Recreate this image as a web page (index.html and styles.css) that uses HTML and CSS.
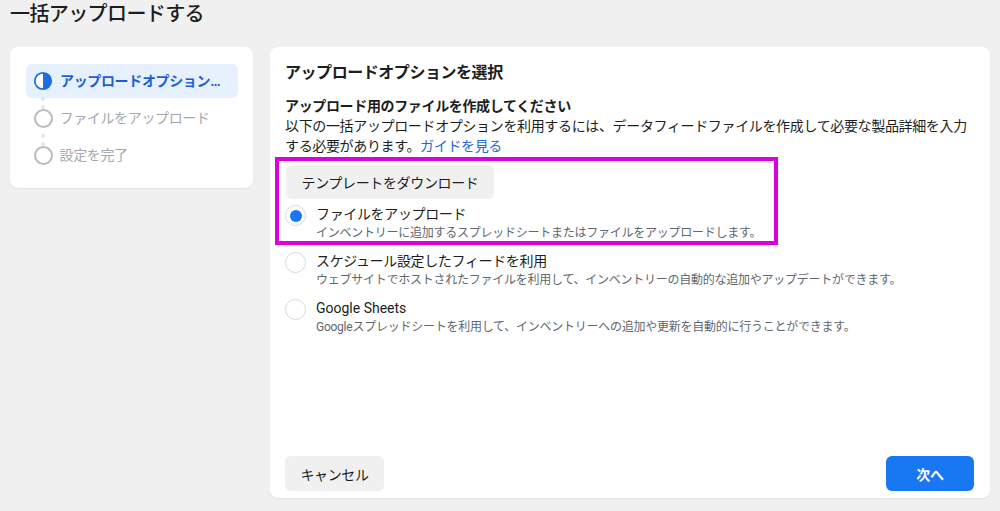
FILE: index.html
```html
<!DOCTYPE html>
<html lang="ja">
<head>
<meta charset="utf-8">
<title>一括アップロードする</title>
<link rel="stylesheet" href="styles.css">
</head>
<body>
<div class="page">
  <h1 class="title">一括アップロードする</h1>
  <div class="layout">
    <aside class="steps-card">
      <div class="step active">
        <svg class="step-icon" viewBox="0 0 20 20" width="20" height="20">
          <circle cx="10" cy="10" r="8.2" fill="#fff" stroke="#1b6fe0" stroke-width="1.8"/>
          <path d="M10 1.8 A8.2 8.2 0 0 1 10 18.2 Z" fill="#1b6fe0"/>
        </svg>
        <span class="step-text">アップロードオプションを選択</span>
      </div>
      <div class="step">
        <span class="step-circle"></span>
        <span class="step-text">ファイルをアップロード</span>
      </div>
      <div class="step last">
        <span class="step-circle"></span>
        <span class="step-text">設定を完了</span>
      </div>
    </aside>

    <main class="main-card">
      <h2 class="heading">アップロードオプションを選択</h2>
      <h3 class="subheading">アップロード用のファイルを作成してください</h3>
      <p class="intro">以下の一括アップロードオプションを利用するには、データフィードファイルを作成して必要な製品詳細を入力する必要があります。<a class="link" href="#">ガイドを見る</a></p>

      <button class="btn btn-gray template-btn">テンプレートをダウンロード</button>

      <div class="options">
        <label class="option">
          <span class="radio checked"></span>
          <span class="option-body">
            <span class="option-title">ファイルをアップロード</span>
            <span class="option-desc">インベントリーに追加するスプレッドシートまたはファイルをアップロードします。</span>
          </span>
        </label>
        <label class="option">
          <span class="radio"></span>
          <span class="option-body">
            <span class="option-title">スケジュール設定したフィードを利用</span>
            <span class="option-desc">ウェブサイトでホストされたファイルを利用して、インベントリーの自動的な追加やアップデートができます。</span>
          </span>
        </label>
        <label class="option">
          <span class="radio"></span>
          <span class="option-body">
            <span class="option-title latin">Google Sheets</span>
            <span class="option-desc">Googleスプレッドシートを利用して、インベントリーへの追加や更新を自動的に行うことができます。</span>
          </span>
        </label>
      </div>

      <div class="footer">
        <button class="btn btn-gray cancel-btn">キャンセル</button>
        <button class="btn btn-blue next-btn">次へ</button>
      </div>

      <div class="highlight-box"></div>
    </main>
  </div>
</div>
</body>
</html>
```

FILE: styles.css
```css
* { box-sizing: border-box; }

html, body {
  margin: 0;
  padding: 0;
  background: #f0f0f0;
  font-family: Roboto, "Noto Sans CJK JP", sans-serif;
  color: #1c1e21;
}

.page {
  padding: 0 10px;
  height: 511px;
  overflow: hidden;
}

.title {
  margin: 0;
  padding-top: 1px;
  height: 47px;
  font-size: 20px;
  line-height: 26px;
  font-weight: 500;
  letter-spacing: -0.6px;
  color: #1c1e21;
}

.layout {
  display: flex;
  gap: 17px;
  align-items: flex-start;
}

/* Left steps card */
.steps-card {
  width: 243px;
  flex: none;
  background: #fff;
  border-radius: 8px;
  padding: 17px 15px 16px 16px;
  box-shadow: 0 1px 2px rgba(0,0,0,0.06);
  display: flex;
  flex-direction: column;
  gap: 3px;
}

.step {
  position: relative;
  display: flex;
  align-items: center;
  height: 34px;
  padding: 0 16px 0 7px;
  border-radius: 6px;
  gap: 7px;
}

.step::before,
.step::after {
  content: "";
  position: absolute;
  left: 15px;
  width: 4px;
  height: 4px;
  border-radius: 50%;
  background: #e4e6e9;
}
.step::before { bottom: -3px; }
.step::after { bottom: -11px; }
.step.last::before,
.step.last::after { display: none; }

.step.active {
  background: #e7f0fd;
}

.step-icon { flex: none; }

.step-circle {
  flex: none;
  width: 19px;
  height: 19px;
  margin-left: 0.5px;
  border: 2px solid #b8bbbf;
  border-radius: 50%;
}

.step-text {
  font-size: 14px;
  letter-spacing: -0.35px;
  white-space: nowrap;
  overflow: hidden;
  text-overflow: ellipsis;
  color: #a5a8ac;
  line-height: 20px;
  min-width: 0;
}

.step.active .step-text {
  color: #1b5fd6;
  font-weight: 700;
}

/* Main card */
.main-card {
  position: relative;
  flex: 1;
  height: 451px;
  background: #fff;
  border-radius: 8px;
  padding: 16px 16px 7px 15px;
  box-shadow: 0 1px 2px rgba(0,0,0,0.06);
  display: flex;
  flex-direction: column;
}

.heading {
  margin: 0;
  font-size: 16px;
  line-height: 20px;
  font-weight: 700;
  letter-spacing: -0.45px;
}

.subheading {
  margin: 13px 0 0;
  font-size: 14px;
  line-height: 20px;
  font-weight: 700;
  letter-spacing: -0.35px;
}

.intro {
  margin: 0;
  font-size: 14px;
  line-height: 20px;
  letter-spacing: -0.35px;
  color: #1c1e21;
}

.link {
  color: #2168d8;
  text-decoration: none;
}

.btn {
  font-family: inherit;
  border: none;
  border-radius: 6px;
  font-size: 14px;
  letter-spacing: -0.35px;
  height: 35px;
  padding: 0 15px;
  cursor: pointer;
}

.btn-gray {
  background: #f0f0f0;
  color: #1c1e21;
}

.btn-blue {
  background: #1877f2;
  color: #fff;
  font-weight: 700;
}

.template-btn {
  align-self: flex-start;
  margin: 9px 0 0 1px;
  height: 34px;
  width: 208px;
}

.options {
  margin-top: 5px;
  display: flex;
  flex-direction: column;
  gap: 9px;
}

.option {
  display: flex;
  gap: 10px;
  cursor: pointer;
}

.radio {
  flex: none;
  width: 21px;
  height: 21px;
  margin-top: 1px;
  border: 1px solid #d6d8db;
  border-radius: 50%;
  display: flex;
  align-items: center;
  justify-content: center;
}

.radio.checked::after {
  content: "";
  width: 12px;
  height: 12px;
  border-radius: 50%;
  background: #1877f2;
}

.option-body {
  display: flex;
  flex-direction: column;
}

.option-title {
  font-size: 14px;
  line-height: 20px;
  letter-spacing: -0.35px;
  color: #1c1e21;
}

.option-title.latin {
  letter-spacing: 0;
}

.option-desc {
  font-size: 12px;
  line-height: 18px;
  letter-spacing: -0.25px;
  color: #606770;
}

.footer {
  margin-top: auto;
  display: flex;
  justify-content: space-between;
}

.cancel-btn { width: 99px; }
.next-btn { width: 88px; }

/* Annotation overlay */
.highlight-box {
  position: absolute;
  left: 5px;
  top: 110px;
  width: 503px;
  height: 88px;
  border: 4px solid #dc00dc;
  pointer-events: none;
}
```
